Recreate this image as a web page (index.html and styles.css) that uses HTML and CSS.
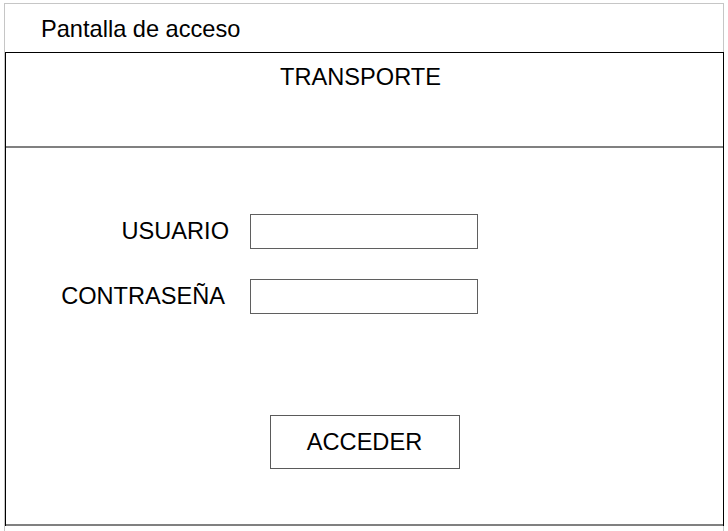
FILE: index.html
```html
<!DOCTYPE html>
<html lang="es">
<head>
<meta charset="utf-8">
<title>Pantalla de acceso</title>
<link rel="stylesheet" href="styles.css">
</head>
<body>
<div class="frame">
  <div class="window-title">Pantalla de acceso</div>
  <div class="panel">
    <div class="panel-head">TRANSPORTE</div>
    <div class="panel-body">
      <div class="form">
        <label class="label">USUARIO</label>
        <div class="field"></div>
        <label class="label label-pass">CONTRASEÑA</label>
        <div class="field"></div>
      </div>
      <div class="button">ACCEDER</div>
    </div>
  </div>
</div>
</body>
</html>
```
FILE: styles.css
```css
html, body {
  margin: 0;
  padding: 0;
  background: #fff;
  overflow: hidden;
}
body {
  font-family: "Liberation Sans", Arial, sans-serif;
  font-size: 23.6px;
  line-height: 27px;
  color: #000;
}
.frame {
  box-sizing: border-box;
  margin: 3px 0 0 4px;
  width: 720px;
  height: 528px;
  border: 1px solid #c6c6c6;
  border-bottom: none;
}
.window-title {
  box-sizing: border-box;
  height: 48px;
  padding: 12px 0 0 36px;
}
.panel {
  margin-right: -1px;
  border: 1px solid #000;
  border-bottom: none;
}
.panel-head {
  box-sizing: border-box;
  height: 95px;
  padding: 11px 8px 0 0;
  text-align: center;
  border-bottom: 2px solid #808080;
}
.panel-body {
  box-sizing: border-box;
  height: 378px;
  padding-top: 66px;
  border-bottom: 2px solid #808080;
}
.form {
  display: grid;
  grid-template-columns: 223px 228px;
  column-gap: 21px;
  row-gap: 30px;
  align-items: start;
}
.label {
  margin-top: 4px;
  text-align: right;
}
.label-pass {
  margin-right: 4px;
}
.field {
  box-sizing: border-box;
  height: 35px;
  border: 1px solid #5f5f5f;
  background: #fff;
}
.button {
  box-sizing: border-box;
  width: 190px;
  height: 54px;
  margin: 101px auto 0;
  border: 1px solid #5a5a5a;
  display: flex;
  align-items: center;
  justify-content: center;
}
```
